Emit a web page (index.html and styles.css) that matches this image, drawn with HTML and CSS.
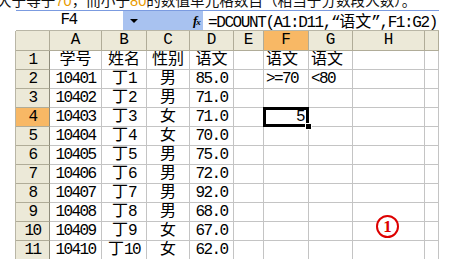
FILE: index.html
```html
<!DOCTYPE html>
<html>
<head>
<meta charset="utf-8">
<link rel="stylesheet" href="styles.css">
</head>
<body>
<div class="caption">大于等于<span class="hl">70</span>，而小于<span class="hl">80</span>的数值单元格数目（相当于分数段人数）。</div>
<div class="sheet">
  <div class="fbar">
    <div class="namebox n">F4</div>
    <div class="nbtn"><span class="tri"></span><span class="fx"><i>f</i><span class="x">x</span></span></div>
    <div class="formula n">=DCOUNT(A1:D11,“<span class="cjk">语文</span>”,F1:G2)</div>
  </div>
  <div class="grid">
    <div class="hd corner"></div>
    <div class="hd">A</div><div class="hd">B</div><div class="hd">C</div><div class="hd">D</div><div class="hd">E</div><div class="hd sel">F</div><div class="hd">G</div><div class="hd">H</div><div class="hd"></div>

    <div class="rh n">1</div>
    <div class="cell c">学号</div><div class="cell c">姓名</div><div class="cell c">性别</div><div class="cell c">语文</div><div class="cell"></div><div class="cell l">语文</div><div class="cell l">语文</div><div class="cell"></div><div class="cell"></div>

    <div class="rh n">2</div>
    <div class="cell c n">10401</div><div class="cell c">丁<span class="n">1</span></div><div class="cell c">男</div><div class="cell c n">85.0</div><div class="cell"></div><div class="cell l n">&gt;=70</div><div class="cell l n">&lt;80</div><div class="cell"></div><div class="cell"></div>

    <div class="rh n">3</div>
    <div class="cell c n">10402</div><div class="cell c">丁<span class="n">2</span></div><div class="cell c">男</div><div class="cell c n">71.0</div><div class="cell"></div><div class="cell"></div><div class="cell"></div><div class="cell"></div><div class="cell"></div>

    <div class="rh n sel">4</div>
    <div class="cell c n">10403</div><div class="cell c">丁<span class="n">3</span></div><div class="cell c">女</div><div class="cell c n">71.0</div><div class="cell"></div><div class="cell r n active">5</div><div class="cell"></div><div class="cell"></div><div class="cell"></div>

    <div class="rh n">5</div>
    <div class="cell c n">10404</div><div class="cell c">丁<span class="n">4</span></div><div class="cell c">女</div><div class="cell c n">70.0</div><div class="cell"></div><div class="cell"></div><div class="cell"></div><div class="cell"></div><div class="cell"></div>

    <div class="rh n">6</div>
    <div class="cell c n">10405</div><div class="cell c">丁<span class="n">5</span></div><div class="cell c">男</div><div class="cell c n">75.0</div><div class="cell"></div><div class="cell"></div><div class="cell"></div><div class="cell"></div><div class="cell"></div>

    <div class="rh n">7</div>
    <div class="cell c n">10406</div><div class="cell c">丁<span class="n">6</span></div><div class="cell c">男</div><div class="cell c n">72.0</div><div class="cell"></div><div class="cell"></div><div class="cell"></div><div class="cell"></div><div class="cell"></div>

    <div class="rh n">8</div>
    <div class="cell c n">10407</div><div class="cell c">丁<span class="n">7</span></div><div class="cell c">男</div><div class="cell c n">92.0</div><div class="cell"></div><div class="cell"></div><div class="cell"></div><div class="cell"></div><div class="cell"></div>

    <div class="rh n">9</div>
    <div class="cell c n">10408</div><div class="cell c">丁<span class="n">8</span></div><div class="cell c">男</div><div class="cell c n">68.0</div><div class="cell"></div><div class="cell"></div><div class="cell"></div><div class="cell"></div><div class="cell"></div>

    <div class="rh n">10</div>
    <div class="cell c n">10409</div><div class="cell c">丁<span class="n">9</span></div><div class="cell c">女</div><div class="cell c n">67.0</div><div class="cell"></div><div class="cell"></div><div class="cell"></div><div class="cell"></div><div class="cell"></div>

    <div class="rh n">11</div>
    <div class="cell c n">10410</div><div class="cell c">丁<span class="n">10</span></div><div class="cell c">女</div><div class="cell c n">62.0</div><div class="cell"></div><div class="cell"></div><div class="cell"></div><div class="cell"></div><div class="cell"></div>

    <div class="badge">1</div>
  </div>
</div>
</body>
</html>
```
FILE: styles.css
```css
html, body {
  margin: 0;
  padding: 0;
  background: #ffffff;
  overflow: hidden;
}
body {
  width: 454px;
  height: 279px;
  font-family: "Liberation Mono", "Noto Sans CJK SC", monospace;
  color: #000;
}
.caption {
  margin-top: -9px;
  margin-left: -3px;
  height: 19px;
  font-family: "Noto Sans CJK SC", sans-serif;
  font-size: 14.6px;
  line-height: 18px;
  white-space: nowrap;
  color: #111;
}
.caption .hl {
  color: #e89a00;
  font-family: "Liberation Sans", sans-serif;
}
.sheet {
  margin-left: 15px;
  width: 424px;
}
.n {
  font-family: "Liberation Mono", monospace;
  letter-spacing: -1.6px;
}
.cjk {
  font-family: "Noto Sans CJK SC", sans-serif;
  letter-spacing: 0;
}
.fbar {
  margin-left: 1px;
  display: grid;
  grid-template-columns: 107px 80px 236px;
  height: 21px;
  box-sizing: border-box;
  border-top: 1px solid #7b9be0;
  border-bottom: 1px solid #b9b6a6;
  background: #fff;
  font-size: 16px;
  line-height: 19px;
}
.namebox {
  text-align: center;
  padding-right: 2px;
  box-sizing: border-box;
  background: #fff;
}
.nbtn {
  background: #a8c2f0;
  display: flex;
  align-items: center;
}
.tri {
  flex: none;
  margin-left: 7px;
  width: 0;
  height: 0;
  border-left: 4px solid transparent;
  border-right: 4px solid transparent;
  border-top: 4px solid #000;
}
.fx {
  flex: none;
  margin-left: 55px;
  font-family: "Liberation Serif", serif;
  font-size: 13px;
  font-weight: bold;
  line-height: 1;
  letter-spacing: -1px;
}
.fx .x {
  font-size: 9px;
  font-style: italic;
}
.formula {
  min-width: 0;
  padding-left: 5px;
  letter-spacing: -1.4px;
  white-space: nowrap;
  overflow: hidden;
}
.formula .cjk {
  letter-spacing: 0;
}
.grid {
  position: relative;
  display: grid;
  grid-template-columns: 34px 52px 45px 43px 44px 30px 45px 44px 72px 14px;
  grid-template-rows: 20px repeat(11, 19px);
  height: 228px;
  overflow: hidden;
  border-left: 1px solid #b9b6a6;
  font-size: 16px;
  line-height: 18px;
}
.cell, .hd, .rh {
  box-sizing: border-box;
  border-right: 1px solid #c4c4c4;
  border-bottom: 1px solid #c4c4c4;
  white-space: nowrap;
  overflow: hidden;
}
.hd, .rh {
  background: #ece9d8;
  border-right-color: #b0ac98;
  border-bottom-color: #b0ac98;
  text-align: center;
  font-family: "Liberation Mono", monospace;
}
.hd {
  line-height: 19px;
}
.rh {
  border-right-color: #8e8b7a;
}
.hd.sel, .rh.sel {
  background: #f8b865;
}
.c {
  text-align: center;
}
.l {
  padding-left: 2px;
}
.r {
  text-align: right;
  padding-right: 4px;
}
.active {
  position: relative;
  overflow: visible;
}
.active::before {
  content: "";
  position: absolute;
  left: -1px;
  top: -1px;
  right: -1px;
  bottom: -1px;
  border: 3px solid #000;
}
.active::after {
  content: "";
  position: absolute;
  right: -4px;
  bottom: -4px;
  width: 5px;
  height: 5px;
  background: #000;
  border: 1px solid #fff;
}
.badge {
  position: absolute;
  left: 360px;
  top: 184px;
  width: 23px;
  height: 23px;
  box-sizing: border-box;
  border: 2px solid #dd0000;
  border-radius: 50%;
  color: #dd0000;
  font-family: "Liberation Serif", serif;
  font-weight: bold;
  font-size: 17px;
  line-height: 19px;
  text-align: center;
  background: #fff;
}
```
